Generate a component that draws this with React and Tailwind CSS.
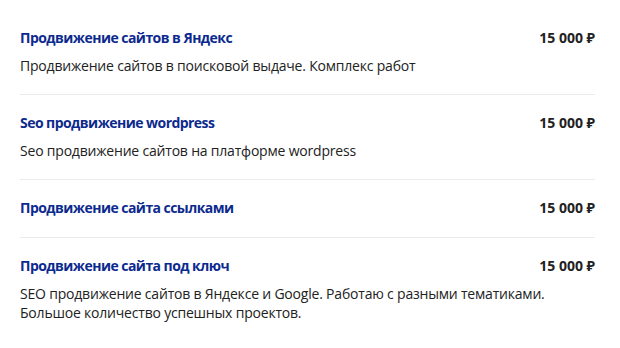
import React from "react";

const services = [
  {
    title: "Продвижение сайтов в Яндекс",
    price: "15 000 ₽",
    desc: "Продвижение сайтов в поисковой выдаче. Комплекс работ",
  },
  {
    title: "Seo продвижение wordpress",
    price: "15 000 ₽",
    desc: "Seo продвижение сайтов на платформе wordpress",
  },
  {
    title: "Продвижение сайта ссылками",
    price: "15 000 ₽",
  },
  {
    title: "Продвижение сайта под ключ",
    price: "15 000 ₽",
    desc: "SEO продвижение сайтов в Яндексе и Google. Работаю с разными тематиками. Большое количество успешных проектов.",
  },
];

export default function App() {
  return (
    <div
      className="w-[620px] h-[348px] bg-white pt-[10px] pl-5 pr-[25px] text-[14px]"
      style={{ fontFamily: '"Open Sans", "Noto Sans", sans-serif' }}
    >
      {services.map((s, i) => (
        <div
          key={s.title}
          className={
            "pt-[18px] pb-[19px] " +
            (i < services.length - 1 ? "border-b border-[#ebebeb]" : "")
          }
        >
          <div className="flex items-start justify-between leading-[20px]">
            <div className="font-bold tracking-[-0.55px] text-[#0c2a8e]">{s.title}</div>
            <div className="font-bold text-[#222]">{s.price}</div>
          </div>
          {s.desc && (
            <div className="mt-2 leading-[19px] tracking-[-0.2px] text-[#222] pr-[30px]">{s.desc}</div>
          )}
        </div>
      ))}
    </div>
  );
}
